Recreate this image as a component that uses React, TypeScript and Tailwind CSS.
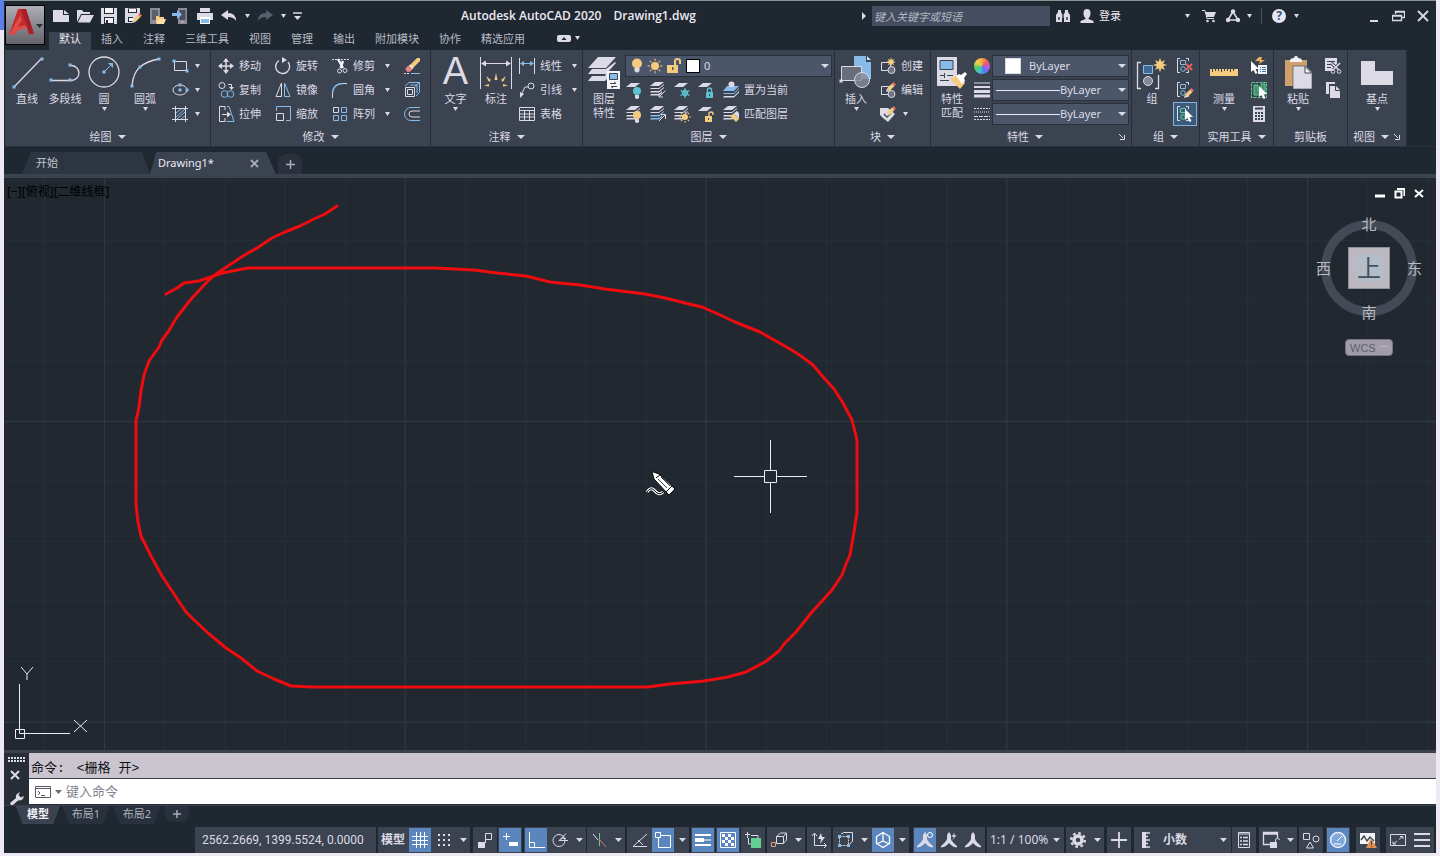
import type { ReactNode } from "react";

const LIGHT = "#dcdae4";
const BLUE = "#86bbea";
const GOLD = "#f6cb80";
const TEAL = "#5fc3cf";

/* ---------- shared pieces ---------- */

function Svg({ w = 18, h = 18, children }: { w?: number; h?: number; children: ReactNode }) {
  return (
    <svg width={w} height={h} viewBox={`0 0 ${w} ${h}`} fill="none" stroke={LIGHT} className="shrink-0" aria-hidden="true">
      {children}
    </svg>
  );
}

function Caret({ size = 5 }: { size?: number }) {
  return (
    <svg width={size} height="4" viewBox="0 0 8 5" preserveAspectRatio="none" className="shrink-0" aria-hidden="true">
      <path d="M0 0h8L4 5z" fill={LIGHT} />
    </svg>
  );
}

function Dot({ x, y, c = BLUE }: { x: number; y: number; c?: string }) {
  return <rect x={x - 1.5} y={y - 1.5} width="3" height="3" fill={c} stroke="none" />;
}

function Sun({ x, y, r = 3, c = GOLD }: { x: number; y: number; r?: number; c?: string }) {
  return (
    <g stroke={c} fill={c} transform={`translate(${x} ${y})`}>
      <circle r={r} stroke="none" />
      {[0, 45, 90, 135, 180, 225, 270, 315].map((a) => (
        <path key={a} d={`M${r + 1} 0h${r * 0.6}`} transform={`rotate(${a})`} />
      ))}
    </g>
  );
}

function Star({ x, y, s = 1 }: { x: number; y: number; s?: number }) {
  return (
    <path
      transform={`translate(${x} ${y}) scale(${s})`}
      d="M0-8 1.5-3.5 5.5-5.5 3.5-1.5 8 0 3.5 1.5 5.5 5.5 1.5 3.5 0 8-1.5 3.5-5.5 5.5-3.5 1.5-8 0-3.5-1.5-5.5-5.5-1.5-3.5z"
      fill={GOLD}
      stroke="none"
    />
  );
}

function Pencil({ x, y }: { x: number; y: number }) {
  return (
    <g transform={`translate(${x} ${y})`} stroke="none">
      <path d="M0 10 1 6.500 3.500 9z" fill={LIGHT} />
      <path d="M1 6.500 6 1.500 8.500 4 3.500 9z" fill={GOLD} />
      <path d="M6 1.500 7.500 0 10 2.500 8.500 4z" fill="#e0716c" />
    </g>
  );
}

function Cursor({ x, y }: { x: number; y: number }) {
  return <path transform={`translate(${x} ${y})`} d="M0 0v11l2.500-2 2 4 2-1-2-4h3.500z" fill="#fff" stroke="none" />;
}

function Layers({ base = LIGHT }: { base?: string }) {
  return (
    <g stroke="none" fill={LIGHT}>
      <path d="M6 1h9l-5 4H1z" />
      <path d="M3 6 1 8h9l5-4v-1l-5 4H2z" />
      <path d="M2 10 1 11.500h9l5-4.500v-1l-5 4z" fill={base} />
      <path d="M2 13 1 14.500h9l3-2.500v-2l-3 3z" fill={base} />
    </g>
  );
}

const Sheet = () => <path d="M6 2h9l-5 4H1z" fill={LIGHT} stroke="none" />;

function Padlock({ x, y, c, open }: { x: number; y: number; c: string; open?: boolean }) {
  return (
    <g transform={`translate(${x} ${y})`}>
      <path d={open ? "M4 4V1.500q0-1.500 2-1.500t2 1.500V3" : "M1.500 4V2q0-2 2-2t2 2v2"} stroke={c} strokeWidth="1.400" />
      <path d="M0 4h7v6H0z" fill={c} stroke="none" />
      <path d="M3 6h1v2H3z" fill="#3b4351" stroke="none" />
    </g>
  );
}

function Bulb({ x, y, c }: { x: number; y: number; c: string }) {
  return (
    <g transform={`translate(${x} ${y})`} stroke="none">
      <circle cx="4" cy="4" r="4" fill={c} />
      <path d="M2 8h4v3q-2 2-4 0z" fill={LIGHT} />
    </g>
  );
}

/* ---------- ribbon controls ---------- */

type BigProps = { icon: ReactNode; label: string; label2?: string; caret?: boolean; className: string };

function BigButton({ icon, label, label2, caret, className }: BigProps) {
  return (
    <button type="button" className={`flex shrink-0 flex-col items-center pt-1.5 ${className}`}>
      <span className="flex h-9 items-start justify-center">{icon}</span>
      <span className="leading-3.5 whitespace-nowrap">{label}</span>
      {label2 && <span className="leading-3.5 whitespace-nowrap">{label2}</span>}
      {caret && <span className="flex h-1.5 items-center"><Caret /></span>}
    </button>
  );
}

type SmallProps = { icon: ReactNode; label?: string; name?: string; caret?: boolean; className?: string };

function SmallButton({ icon, label, name, caret, className = "" }: SmallProps) {
  return (
    <button type="button" aria-label={label ?? name} className={`flex h-6 items-center ${className}`}>
      <span className="flex w-[18px] shrink-0 justify-center">{icon}</span>
      {label && <span className="ml-1 leading-4 whitespace-nowrap">{label}</span>}
      {caret && <span className={label ? "ml-2.5" : "ml-1.5"}><Caret /></span>}
    </button>
  );
}

type PanelProps = { title: string; more?: boolean; launcher?: boolean; className: string; children: ReactNode };

function Panel({ title, more = true, launcher, className, children }: PanelProps) {
  return (
    <section className={`flex shrink-0 flex-col border-r border-[#262d38] bg-[#3b4351] ${className}`}>
      <div className="flex h-[78px]">{children}</div>
      <div className="flex h-[18px] items-center">
        <button type="button" className="flex flex-1 items-center justify-center gap-1.5 leading-4">
          {title}
          {more && <Caret size={8} />}
        </button>
        {launcher && (
          <button type="button" aria-label={`${title}设置`} className="w-3">
            <Svg w={6} h={6}><path d="M0 0l4 4M5.500 1v4.500H1" /></Svg>
          </button>
        )}
      </div>
    </section>
  );
}

function Combo({ name, value, className, children }: { name: string; value: string; className: string; children: ReactNode }) {
  return (
    <div className={`flex h-[22px] items-center border border-[#2a313d] bg-[#4b566a] pr-0.5 ${className}`}>
      {children}
      <select aria-label={name} className="min-w-0 flex-1 appearance-none bg-transparent text-[11px] leading-4 outline-none">
        <option>{value}</option>
      </select>
      <Caret size={8} />
    </div>
  );
}

/* ---------- ribbon ---------- */

function DrawPanel() {
  return (
    <Panel title="绘图" className="w-[206px]">
      <BigButton className="ml-0.5 w-10" label="直线" icon={
        <Svg w={34} h={34}><path d="M4 31 31 3" strokeWidth="1.300" /><Dot x={4} y={31} /><Dot x={32} y={3} /></Svg>
      } />
      <BigButton className="w-9" label="多段线" icon={
        <Svg w={34} h={34}><path d="M3 24.500h20M23 9.500a8 7.500 0 0 1 0 15" strokeWidth="1.300" /><Dot x={3} y={24} /><Dot x={22} y={24} /><Dot x={22} y={9} /></Svg>
      } />
      <BigButton className="w-[42px]" label="圆" caret icon={
        <Svg w={34} h={34}><circle cx="17" cy="16" r="15" strokeWidth="1.300" /><path d="M17 16l6-6" stroke={BLUE} /><path d="M26 7v5l-5-5z" fill={BLUE} stroke="none" /><Dot x={17} y={16} /></Svg>
      } />
      <BigButton className="w-10" label="圆弧" caret icon={
        <Svg w={32} h={34}><path d="M3 30Q4 17 11 11T30 3" strokeWidth="1.300" /><Dot x={3} y={30} /><Dot x={11} y={11} /><Dot x={30} y={3} /></Svg>
      } />
      <div className="ml-1.5 flex flex-col pt-1">
        <SmallButton name="矩形" caret icon={<Svg><path d="M3.500 4.500h12v9h-12z" /><Dot x={3} y={4} /><Dot x={16} y={14} /></Svg>} />
        <SmallButton name="椭圆" caret icon={<Svg><ellipse cx="9" cy="9" rx="7" ry="5" /><Dot x={9} y={9} /><Dot x={16} y={9} /><Dot x={9} y={4} /></Svg>} />
        <SmallButton name="图案填充" caret icon={<Svg><path d="M4.500 1v16M14.500 1v16M1 3.500h16M1 14.500h16" /><path d="M5 8l5-4M5 12l9-8M6 14l8-7M10 14l4-3" stroke={BLUE} /></Svg>} />
      </div>
    </Panel>
  );
}

function ModifyPanel() {
  return (
    <Panel title="修改" className="w-[220px]">
      <div className="ml-1.5 w-[57px] pt-1">
        <SmallButton label="移动" icon={<Svg><path d="M9 2v14M2 9h14" strokeWidth="1.500" /><path d="M9 1l3 4H6zM9 17l3-4H6zM1 9l4-3v6zM17 9l-4-3v6z" fill={LIGHT} stroke="none" /></Svg>} />
        <SmallButton label="复制" icon={<Svg><circle cx="5" cy="4.500" r="3" /><path d="M11 3.500h3.500V6" /><path d="M12 6h5l-2.500 3z" fill={LIGHT} stroke="none" /><g stroke={BLUE}><circle cx="7.500" cy="13" r="3.300" /><circle cx="13.500" cy="13" r="3.300" /></g></Svg>} />
        <SmallButton label="拉伸" icon={<Svg><path d="M8 5V1.500H2.500v15H8V13M5 9.500h6" /><path d="M10 6.500v6l4-3z" fill={LIGHT} stroke="none" /><path d="M10 1.500h2l5 15H9.500" stroke={BLUE} /></Svg>} />
      </div>
      <div className="w-[57px] pt-1">
        <SmallButton label="旋转" icon={<Svg><path d="M5 3.500A7 7 0 1 0 14 5" strokeWidth="1.400" /><path d="M8 0v6l5-3z" fill={LIGHT} stroke="none" /></Svg>} />
        <SmallButton label="镜像" icon={<Svg><path d="M7.500 2v13.500H2z" /><path d="M10.500 2v13.500H16z" stroke={BLUE} /></Svg>} />
        <SmallButton label="缩放" icon={<Svg><path d="M2.500 8.500h7v7h-7z" /><path d="M2.500 6V1.500h14v14H12" stroke={BLUE} /></Svg>} />
      </div>
      <div className="w-[72px] pt-1">
        <SmallButton label="修剪" caret icon={<Svg><path d="M1 2.500h17" strokeDasharray="2 1" /><path d="M7 2l5 9M12 4 9.500 11" stroke="#f2f1f7" strokeWidth="2.400" /><circle cx="8.500" cy="14" r="2" /><circle cx="14" cy="13.500" r="2" /></Svg>} />
        <SmallButton label="圆角" caret icon={<Svg><path d="M1.500 17v-5M12 2.500h4" /><path d="M1.500 12Q2 3 12 2.500" stroke={BLUE} strokeWidth="1.400" /></Svg>} />
        <SmallButton label="阵列" caret icon={<Svg><path d="M2.500 2.500h5v5h-5z" /><path d="M10.500 2.500h5v5h-5zM2.500 10.500h5v5h-5zM10.500 10.500h5v5h-5z" stroke={BLUE} /></Svg>} />
      </div>
      <div className="pt-1">
        <SmallButton name="删除" icon={<Svg><path d="M1 16.500h5" strokeDasharray="2 1" /><path d="M8 16.500h9" stroke={BLUE} /><g stroke="none"><path d="M5 10 14 1h3v3l-9 9z" fill={GOLD} /><path d="M7 7.500 10.500 11l-1 1L6 8.500z" fill="#f5f5fa" /><path d="M6 8.500 9.500 12l-2 2.500-3 .5-2-2.500.5-2z" fill="#e88481" /></g></Svg>} />
        <SmallButton name="分解" icon={<Svg><path d="M2.500 6.500h9v9h-9zM4.500 8.500h5v5h-5z" /><path d="M2 5l4-3.500h10.500v10L13 15M11.500 6l5-4.500M7 4h7v8" stroke={BLUE} /></Svg>} />
        <SmallButton name="偏移" icon={<Svg><path d="M17 2.500H8a6.500 6.500 0 0 0 0 13h9" stroke={BLUE} /><path d="M17 6H9a3 3 0 0 0 0 6h8" /></Svg>} />
      </div>
    </Panel>
  );
}

function AnnotatePanel() {
  return (
    <Panel title="注释" className="w-[152px]">
      <BigButton className="ml-1 w-[41px]" label="文字" caret icon={
        <span className="font-[Liberation_Sans,sans-serif] text-[38px] leading-[30px] text-[#dcdae4]">A</span>
      } />
      <BigButton className="w-10" label="标注" icon={
        <Svg w={34} h={34}>
          <path d="M1.500 1v32M32.500 1v32M3 7.500h28" />
          <path d="M2 7.500l5-3v6zM32 7.500l-5-3v6z" fill={LIGHT} stroke="none" />
          <g fill={GOLD} stroke="none"><path d="M15.500 24l1.500-7 1.500 7zM12 24l-5-4 3 6zM22 24l5-4-3 6zM10 28l-5 1.500 5 1zM24 28l5 1.500-5 1z" /></g>
        </Svg>
      } />
      <div className="ml-0.5 pt-1">
        <SmallButton label="线性" caret icon={<Svg><path d="M1.500 1v16M16.500 1v16" /><path d="M3 6.500h12" stroke={BLUE} /><path d="M2 6.500l4-2.500v5zM16 6.500l-4-2.500v5z" fill={BLUE} stroke="none" /></Svg>} />
        <SmallButton label="引线" caret icon={<Svg><circle cx="13" cy="5" r="3" /><path d="M10 6H7L3 14" /><path d="M2 11v6l4-4z" fill={LIGHT} stroke="none" /></Svg>} />
        <SmallButton label="表格" icon={<Svg><path d="M1.500 2.500h15v13h-15zM1.500 5.500h15M1.500 9h15M1.500 12h15M6.500 5v10M11.500 5v10" /></Svg>} />
      </div>
    </Panel>
  );
}

function LayerPanel() {
  return (
    <Panel title="图层" className="w-[252px]">
      <BigButton className="ml-1 w-[34px]" label="图层" label2="特性" icon={
        <Svg w={34} h={34}>
          <g fill={LIGHT} stroke="none"><path d="M11 1h18L19 12H1z" /><path d="M5 13 1 18h18L29 7l-1-1-9 7z" /><path d="M5 20 1 25h17l2-2v-8l-2 5z" /></g>
          <path d="M20 15h13v18H20z" fill="#f5f5fa" stroke="none" />
          <path d="M22.500 17.500h8v6h-8z" fill={BLUE} stroke="#3b4351" />
          <path d="M23 27.500h6l-2-1.500M30 30.500h-6l2 1.500" stroke="#3b4351" />
        </Svg>
      } />
      <div className="ml-1 flex flex-col pt-[5px]">
        <Combo name="图层" value="0" className="mb-px w-[207px] gap-1 pl-0.5">
          <div className="flex items-center">
            <Svg w={18} h={18}><circle cx="9" cy="6.500" r="5" fill={GOLD} stroke="none" /><path d="M6.500 11h5v3q-2.500 3-5 0z" fill={LIGHT} stroke="none" /></Svg>
            <Svg w={18} h={18}><Sun x={9} y={9} r={4} /></Svg>
            <Svg w={20} h={18}><path d="M3 8h11v8H3z" fill={GOLD} stroke="none" /><path d="M11 8V4q0-2 2.500-2T16 4v3" stroke={GOLD} strokeWidth="2" /><path d="M8 10h1.500v3H8z" fill="#4b566a" stroke="none" /></Svg>
            <span className="ml-0.5 size-3.5 border border-black bg-white" />
          </div>
        </Combo>
        <div className="flex h-6">
          <SmallButton name="关" className="w-6" icon={<Svg><Sheet /><Bulb x={8} y={6} c={TEAL} /></Svg>} />
          <SmallButton name="隔离" className="w-6" icon={<Svg><Layers /><path d="M16.500 9.500l-6 6M10 12v4h4" /></Svg>} />
          <SmallButton name="冻结" className="w-6" icon={<Svg><Sheet /><g stroke={TEAL} strokeWidth="1.300"><path d="M12 7v10M7.500 9.500l9 5M16.500 9.500l-9 5" /><circle cx="12" cy="12" r="2.500" /></g></Svg>} />
          <SmallButton name="锁定" className="w-6" icon={<Svg><Sheet /><Padlock x={9} y={7} c={TEAL} /></Svg>} />
          <SmallButton label="置为当前" className="ml-px" icon={<Svg><path d="M5 5h12l-5 5H1zM2 12l-1 1h11l5-5V7l-5 5z" fill={BLUE} stroke="none" /><circle cx="9.500" cy="3.500" r="3" fill={LIGHT} stroke="none" /><path d="M2 15l-1 1.500h11l5-5V10l-5 5z" fill={LIGHT} stroke="none" /></Svg>} />
        </div>
        <div className="flex h-6">
          <SmallButton name="打开所有图层" className="w-6" icon={<Svg><Layers /><Bulb x={8} y={6} c={GOLD} /></Svg>} />
          <SmallButton name="取消隔离" className="w-6" icon={<Svg><Layers base={BLUE} /><path d="M10 16l6-6M12 9.500h4.500V14" /></Svg>} />
          <SmallButton name="解冻所有图层" className="w-6" icon={<Svg><Layers /><Sun x={12} y={12} r={3} /></Svg>} />
          <SmallButton name="解锁" className="w-6" icon={<Svg><Sheet /><Padlock x={8} y={7} c={GOLD} open /></Svg>} />
          <SmallButton label="匹配图层" className="ml-px" icon={<Svg><Layers /><path d="M8 11l4-2 5 5-3 3z" fill={GOLD} stroke="none" /><path d="M12 9l3-3 2 2v6z" fill={LIGHT} stroke="none" /></Svg>} />
        </div>
      </div>
    </Panel>
  );
}

const BlockShape = () => (
  <g><path d="M2.500 13.500v-8h9v5M2 13.500h8" /><circle cx="12.500" cy="13" r="3.500" fill="#6f7482" /></g>
);

function BlockPanel() {
  return (
    <Panel title="块" className="w-24">
      <BigButton className="ml-0.5 w-[38px]" label="插入" caret icon={
        <Svg w={34} h={34}>
          <path d="M15 0h12v6h5v17H15z" fill={BLUE} stroke="none" /><path d="M28 0l4 4h-4z" fill="#c4e0f8" stroke="none" />
          <path d="M2.500 10.500h20v14h-20z" fill="#686e7b" /><circle cx="23" cy="24" r="7.500" fill="#878c98" fillOpacity=".8" /><Dot x={2} y={25} c={LIGHT} />
        </Svg>
      } />
      <div className="ml-1 pt-1">
        <SmallButton label="创建" icon={<Svg><BlockShape /><Star x={12} y={5} s={0.6} /></Svg>} />
        <SmallButton label="编辑" icon={<Svg><BlockShape /><Pencil x={7} y={1} /></Svg>} />
        <SmallButton name="编辑属性" caret icon={<Svg><path d="M1 3h8l7 6-7 8-5-4-3-3z" fill={LIGHT} stroke="none" /><path d="M5 9l3 3 4-4" stroke="#3b4351" strokeWidth="1.500" /><Pencil x={7} y={1} /></Svg>} />
      </div>
    </Panel>
  );
}

function PropertiesPanel() {
  return (
    <Panel title="特性" launcher className="w-[201px]">
      <BigButton className="ml-px w-10" label="特性" label2="匹配" icon={
        <Svg w={32} h={34}>
          <path d="M1 1h20v29H1z" fill={LIGHT} stroke="none" /><path d="M4 4.500h13v9H4z" fill={BLUE} stroke="#3b4351" />
          <path d="M4 19.500h5m2 0h6M8.500 17v5M4 24.500h9" stroke="#3b4351" />
          <path d="M14 23l7-4 8 8-5 6z" fill={GOLD} stroke="none" /><path d="M20 20l3-2 2 1 4-3 2 2-3 4 1 3-3 3z" fill="#fff" stroke="none" />
        </Svg>
      } />
      <div className="flex w-5 flex-col items-center pt-1">
        <span className="flex h-6 items-center">
          <span className="size-4 rounded-full bg-[conic-gradient(#f5a742,#ea5b5b,#b45bea,#4d7df0,#45c4c9,#5fc75f,#f0d34d,#f5a742)]" />
        </span>
        <span className="flex h-6 items-center"><Svg w={16} h={16}><path d="M0 1h16" strokeWidth="1" /><path d="M0 5h16" strokeWidth="2" /><path d="M0 9.500h16" strokeWidth="3" /><path d="M0 14h16" strokeWidth="3" /></Svg></span>
        <span className="flex h-6 items-center"><Svg w={16} h={16}><path d="M0 2.500h16" strokeDasharray="2 1" /><path d="M0 6h16" strokeDasharray="1 1" /><path d="M0 10.500h16" strokeDasharray="4 1" /><path d="M0 13.500h16" strokeDasharray="2 1" /></Svg></span>
      </div>
      <div className="flex flex-col gap-0.5 pt-[5px]">
        <Combo name="对象颜色" value="ByLayer" className="w-[137px] gap-2 pl-3">
          <span className="size-4 border border-[#d9d9d9] bg-white" />
        </Combo>
        <Combo name="线宽" value="ByLayer" className="w-[137px] pl-[3px]">
          <span className="h-px w-16 bg-[#eceaf2]" />
        </Combo>
        <Combo name="线型" value="ByLayer" className="w-[137px] pl-[3px]">
          <span className="h-px w-16 bg-[#eceaf2]" />
        </Combo>
      </div>
    </Panel>
  );
}

const Brackets = ({ c = BLUE, fill = "none" }: { c?: string; fill?: string }) => (
  <g><path d="M4 1.500H1.500v14H4M10 1.500h2.500V4M10 15.500h2.500V13" /><path d="M4.500 3.500h5v4h-5z" stroke={c} fill={fill} /><circle cx="7" cy="12" r="2.300" stroke={c} fill={fill} /></g>
);

function GroupPanel() {
  return (
    <Panel title="组" className="w-[68px]">
      <BigButton className="ml-0.5 w-9" label="组" icon={
        <Svg w={32} h={34}>
          <path d="M5 6.500H1.500v26H5M19 32.500h3.500V19" strokeWidth="1.300" />
          <path d="M7.500 9.500h9v8h-9z" fill="#3f6a94" stroke={BLUE} /><circle cx="12" cy="25" r="4.500" fill="#858995" /><Star x={24} y={9} s={0.9} />
        </Svg>
      } />
      <div className="ml-[3px] flex flex-col items-center pt-1">
        <SmallButton name="解除编组" className="w-6 justify-center" icon={<Svg><Brackets /><path d="M10 7l6 6m0-6l-6 6" stroke="#e0605f" strokeWidth="2" /></Svg>} />
        <SmallButton name="组编辑" className="w-6 justify-center" icon={<Svg><Brackets /><Pencil x={8} y={7} /></Svg>} />
        <SmallButton name="启用组选择" className="w-6 justify-center border border-[#7fb2e0] bg-[#3d5a78]" icon={<Svg><Brackets c="#62cf93" /><Cursor x={9} y={4} /></Svg>} />
      </div>
    </Panel>
  );
}

function UtilityPanel() {
  return (
    <Panel title="实用工具" className="w-[74px]">
      <BigButton className="ml-1.5 w-9" label="测量" caret icon={
        <Svg w={30} h={34}><path d="M1 13h28v7H1z" fill={GOLD} stroke="none" /><path d="M3.500 13v3m3-3v2m3-2v2m3-2v3m3-3v2m3-2v2m3-2v3m3-3v2" stroke="#3b4351" /></Svg>
      } />
      <div className="ml-2 pt-1">
        <SmallButton name="快速选择" icon={<Svg><path d="M9 0h3l-1 3h4l-6 4 1-3H5z" fill="#f3b05a" stroke="none" /><path d="M8 8h9v9H8z" fill="#f1f1f6" stroke="none" /><path d="M10 10.500h1m1 0h4m-6 2h1m1 0h4m-6 2h1m1 0h4" stroke="#3f78ad" /><Cursor x={1} y={4} /></Svg>} />
        <SmallButton name="全部选择" icon={<Svg><path d="M1.500 1.500h15v15h-15z" stroke="#62cf93" strokeDasharray="3 1" /><path d="M4 4h4v6h3V3h4v11H4z" fill="#3c9468" stroke="#62cf93" /><Cursor x={9} y={5} /></Svg>} />
        <SmallButton name="计算器" icon={<Svg><path d="M3 1h12v16H3z" fill={LIGHT} stroke="none" /><path d="M5 3.500h8" stroke="#3b4351" strokeWidth="2" /><path d="M5 8h8M5 11h8M5 14h8" stroke="#3b4351" strokeWidth="2" strokeDasharray="2 1" /></Svg>} />
      </div>
    </Panel>
  );
}

function ClipboardPanel() {
  return (
    <Panel title="剪贴板" more={false} className="w-[74px]">
      <BigButton className="ml-1.5 w-9" label="粘贴" caret icon={
        <Svg w={30} h={34}>
          <path d="M2 4h22v26H2z" fill="#cf9f6c" stroke="none" /><path d="M7 4q1-2 4-2 0-2 2-2t2 2q3 0 4 2v2H7z" fill="#f5f5fa" stroke="none" />
          <path d="M10 10h13l6 6v17H10z" fill={LIGHT} stroke="#3b4351" strokeWidth=".6" /><path d="M22 10.500v6.500h6.500z" fill="#fff" stroke="#3b4351" />
        </Svg>
      } />
      <div className="ml-2 pt-1">
        <SmallButton name="剪切" icon={<Svg><path d="M1 1h12v7l-4 6H1z" fill={LIGHT} stroke="none" /><path d="M3 4.500h8M3 7.500h4M3 10.500h4" stroke="#3b4351" /><path d="M7 6l8 7M16 6l-7 7" stroke="#3b4351" strokeWidth="3" /><path d="M7 6l8 7M16 6l-7 7" strokeWidth="1.500" /><circle cx="9" cy="14.500" r="1.800" /><circle cx="15" cy="14.500" r="1.800" /></Svg>} />
        <SmallButton name="复制剪裁" icon={<Svg><path d="M2 1h9v2H5v10H2z" fill={LIGHT} stroke="none" /><path d="M6 5h6l4 4v8H6z" fill={LIGHT} stroke="none" /><path d="M11.500 5v4.500H16" stroke="#3b4351" /></Svg>} />
      </div>
    </Panel>
  );
}

function Ribbon() {
  return (
    <div className="ml-px flex h-[97px] overflow-hidden border-b border-[#2a313c] text-[11px] text-[#dcdae4]">
      <DrawPanel />
      <ModifyPanel />
      <AnnotatePanel />
      <LayerPanel />
      <BlockPanel />
      <PropertiesPanel />
      <GroupPanel />
      <UtilityPanel />
      <ClipboardPanel />
      <Panel title="视图" launcher className="w-[59px]">
        <BigButton className="ml-[9px] w-10" label="基点" caret icon={
          <Svg w={34} h={34}><path d="M1 5h14v10h18v14H1z" fill={LIGHT} stroke="none" /></Svg>
        } />
      </Panel>
    </div>
  );
}

/* ---------- title bar ---------- */

function IconButton({ name, className = "w-6", children }: { name: string; className?: string; children: ReactNode }) {
  return (
    <button type="button" aria-label={name} className={`flex h-6 shrink-0 items-center justify-center ${className}`}>
      {children}
    </button>
  );
}

function QuickAccess() {
  return (
    <div className="flex items-center">
      <IconButton name="新建"><Svg><path d="M1 3h10v5h6v7H1z" fill={LIGHT} stroke="none" /><path d="M12 3l5 4h-5z" fill={LIGHT} stroke="none" /></Svg></IconButton>
      <IconButton name="打开"><Svg><path d="M1 15V3h5l1.500 2H14v2H5z" fill={LIGHT} stroke="none" /><path d="M5.500 8H18l-4 7.500H2z" fill={LIGHT} stroke="none" /></Svg></IconButton>
      <IconButton name="保存"><Svg><path d="M1 1h16v16H1z" fill={LIGHT} stroke="none" /><path d="M4 1h10v6H4zM4 10h10v7H4z" fill="#1f2730" stroke="none" /><path d="M5 1h8v5H5zM5 11h8v5H5z" fill="#f4f4f9" stroke="none" /><path d="M6 13h2v3H6z" fill="#1f2730" stroke="none" /></Svg></IconButton>
      <IconButton name="另存为"><Svg><path d="M1 1h15v6l-8 9H1z" fill={LIGHT} stroke="none" /><path d="M4 1.500h9V6H4zM4 10h5v5H4z" fill="#1f2730" stroke="none" /><path d="M5 2h7v3H5zM5 11h4v3H5z" fill="#f4f4f9" stroke="none" /><Pencil x={8} y={6} /></Svg></IconButton>
      <IconButton name="从移动设备打开"><Svg><path d="M2 1h10v8H8v8H2z" fill="#8a8d97" stroke="none" /><path d="M4 3h6v10H4z" fill="#5a5f6c" stroke="none" /><path d="M8 9h3l1 1h4v6H8z" fill={GOLD} stroke="none" /><path d="M10.500 12H18l-2 5H8z" fill="#fbe0aa" stroke="none" /></Svg></IconButton>
      <IconButton name="保存到移动设备"><Svg><path d="M6 1h9v16H6z" fill="#8a8d97" stroke="none" /><path d="M7.500 3h6v10h-6z" fill="#4a4f5c" stroke="none" /><path d="M9.500 15h2" /><path d="M0 6h5V3l5 4.500L5 12V9H0z" fill={BLUE} stroke="none" /></Svg></IconButton>
      <IconButton name="打印"><Svg><path d="M4 1h10v4H4zM1 6h16v7H1z" fill={LIGHT} stroke="none" /><path d="M4 10h10v7H4z" fill="#fff" stroke="none" /><path d="M5 12h8v4H5z" fill={BLUE} stroke="none" /></Svg></IconButton>
      <IconButton name="放弃"><Svg><path d="M1 8l7-5v3q8 0 8 8-2-4-8-4v3z" fill={LIGHT} stroke="none" /></Svg></IconButton>
      <IconButton name="放弃列表" className="w-3"><Caret /></IconButton>
      <IconButton name="重做"><Svg><path d="M17 8l-7-5v3q-8 0-8 8 2-4 8-4v3z" fill="#58606e" stroke="none" /></Svg></IconButton>
      <IconButton name="重做列表" className="w-3"><Caret /></IconButton>
      <IconButton name="自定义快速访问工具栏" className="w-4"><Svg w={9} h={8}><path d="M0 1h9" strokeWidth="1.500" /><path d="M1 4h7L4.500 8z" fill={LIGHT} stroke="none" /></Svg></IconButton>
    </div>
  );
}

function TitleBar() {
  return (
    <div className="flex h-[30px] items-center pr-px text-[11px] text-[#eceaf2]">
      <QuickAccess />
      <h1 className="flex flex-1 justify-center gap-3 pr-1 font-['Open_Sans',sans-serif] text-xs font-semibold whitespace-nowrap">
        <span>Autodesk AutoCAD 2020</span>
        <span>Drawing1.dwg</span>
      </h1>
      <IconButton name="收起搜索" className="w-4"><Svg w={4} h={8}><path d="M0 0l4 4-4 4z" fill={LIGHT} stroke="none" /></Svg></IconButton>
      <input
        aria-label="搜索"
        placeholder="键入关键字或短语"
        className="h-5 w-[178px] bg-[#454e60] px-0.5 text-[11px] italic outline-none placeholder:text-[#b4b6c2]"
      />
      <IconButton name="搜索" className="ml-px w-6"><Svg w={14} h={14}><path d="M2 1h3v2l1 2v8H0V6l2-3zM9 1h3v2l2 3v7H8V5l1-2z" fill={LIGHT} stroke="none" /><path d="M6 5h2v4H6zM2 8h2v3H2zM10 8h2v3h-2z" fill="#5b6270" stroke="none" /></Svg></IconButton>
      <button type="button" className="flex items-center">
        <span className="flex w-6 justify-center"><Svg w={14} h={14}><path d="M7 0q3.500 0 3.500 4T8.500 9v1l5 2v2H.500v-2l5-2V9Q3.500 8 3.500 4T7 0z" fill={LIGHT} stroke="none" /></Svg></span>
        登录
      </button>
      <IconButton name="登录选项" className="ml-[59px] w-3.5"><Caret /></IconButton>
      <IconButton name="应用商店" className="ml-[3px] w-6"><Svg w={16} h={14}><path d="M1 1.500h3l2 8h7" /><path d="M4 3h11l-2 5H6z" fill={LIGHT} stroke="none" /><circle cx="6.500" cy="12" r="1.300" fill={LIGHT} stroke="none" /><circle cx="12.500" cy="12" r="1.300" fill={LIGHT} stroke="none" /></Svg></IconButton>
      <IconButton name="保持连接"><Svg w={16} h={14}><path d="M8 2.500 3 11h10z" strokeWidth="1.600" /><g fill={LIGHT} stroke="none"><circle cx="8" cy="2.500" r="2.200" /><circle cx="3" cy="11" r="2.200" /><circle cx="13" cy="11" r="2.200" /></g></Svg></IconButton>
      <IconButton name="连接选项" className="w-2"><Caret /></IconButton>
      <span className="mx-2 h-4 w-px bg-[#4b5260]" />
      <IconButton name="帮助" className="w-[18px]">
        <span className="flex size-3.5 items-center justify-center rounded-full bg-[#e6e5f0] text-xs font-bold text-[#2f5586]">?</span>
      </IconButton>
      <IconButton name="帮助选项" className="w-4"><Caret /></IconButton>
      <IconButton name="最小化" className="ml-[58px] w-6"><Svg w={12} h={14}><path d="M2 12h8" strokeWidth="2" /></Svg></IconButton>
      <IconButton name="还原"><Svg w={13} h={12}><path d="M3.500 4V1.500h9v6H10M3 2h9M.500 5.500h9v5h-9zM0 6h9" strokeWidth="1.300" /></Svg></IconButton>
      <IconButton name="关闭" className="ml-px w-6"><Svg w={12} h={12}><path d="M1 1l10 10M11 1 1 11" strokeWidth="1.800" /></Svg></IconButton>
    </div>
  );
}

const MENU = ["默认", "插入", "注释", "三维工具", "视图", "管理", "输出", "附加模块", "协作", "精选应用"];

function Header() {
  return (
    <header className="flex border-t border-[#8b9097]">
      <button type="button" aria-label="应用程序菜单" className="mt-1 mr-1 ml-px flex size-10 shrink-0 items-center border border-black bg-linear-to-b from-[#b0aeb6] to-[#65646d]">
        <Svg w={38} h={38}>
          <g stroke="none">
            <path d="M12 3h8l8 25h-5.500l-2-7-9 3L8 29H3z" fill="#c42b2f" />
            <path d="M3 29 14 9l2 5-4 7 7-2 1 3-9 3-3 4z" fill="#e04a48" />
            <path d="M15 3h5l8 25h-4z" fill="#a41f27" />
            <path d="M30 18h7l-3.500 4z" fill="#2a2d35" />
          </g>
        </Svg>
      </button>
      <div className="min-w-0 flex-1">
        <TitleBar />
        <nav className="flex h-[19px] items-end text-[11px] leading-4 text-[#b9bbc6]">
          {MENU.map((item, i) => (
            <button
              key={item}
              type="button"
              className={i === 0 ? "h-[18px] bg-[#3b4351] px-2.5 pb-1 leading-3.5 text-[#eceaf2]" : "h-[18px] px-2.5 pb-1 leading-3.5 whitespace-nowrap"}
            >
              {item}
            </button>
          ))}
          <IconButton name="最小化功能区" className="ml-[22px] w-3.5"><Svg w={14} h={7}><rect width="14" height="7" rx="2" fill={LIGHT} stroke="none" /><path d="M7 2l2.500 3h-5z" fill="#1f2730" stroke="none" /></Svg></IconButton>
          <IconButton name="功能区选项" className="w-3"><Caret /></IconButton>
        </nav>
      </div>
    </header>
  );
}

/* ---------- drawing area ---------- */

function FileTabs() {
  return (
    <div className="flex h-[31px] items-end border-b-4 border-[#3b4351] pl-[18px] text-[11px] text-[#c3c4ce]">
      <button type="button" className="h-[22px] w-32 bg-[#2d3542] pl-3.5 text-left [clip-path:polygon(7%_0,94%_0,100%_100%,0_100%)]">开始</button>
      <div className="flex h-[22px] w-[126px] items-center justify-between bg-[#3b4351] pr-[17px] pl-2 text-[#eceaf2] [clip-path:polygon(5%_0,92%_0,100%_100%,0_100%)]">
        <button type="button">Drawing1*</button>
        <button type="button" aria-label="关闭 Drawing1"><Svg w={9} h={9}><path d="M1 1l7 7M8 1 1 8" strokeWidth="1.800" stroke="#a9abb6" /></Svg></button>
      </div>
      <button type="button" aria-label="新图形" className="ml-0.5 flex h-5 w-6 items-center justify-center rounded-t-lg bg-[#2a313d]">
        <Svg w={9} h={9}><path d="M4.500 0v9M0 4.500h9" strokeWidth="1.500" stroke="#a9abb6" /></Svg>
      </button>
    </div>
  );
}

const STROKE =
  "337,206 325,214 314,219 300,226 285,232 272,238 257,248 243,256 225,268 216,274 207,282 192,298 177,317 168,332 162,340 159,347 149,361 144,375 141,391 139,407 136,421 136,505 138,522 141,536 151,556 162,576 174,594 186,612 192,618 208,633 226,648 241,658 257,671 274,679 291,686 312,687 648,687 670,684 704,681 728,677 746,672 765,662 779,651 784,644 796,632 812,612 832,590 842,575 846,564 850,555 854,532 857,512 857,440 852,420 843,403 834,389 824,378 813,365 801,356 790,349 774,340 760,332 735,322 718,314 702,307 685,303 665,298 645,294 605,289 580,285 550,282 526,276 497,273 474,270 435,268 248,268 222,273 199,281 184,283 177,288 166,294";

function Canvas() {
  return (
    <main className="relative min-h-[572px] flex-1 overflow-hidden bg-[#212830] text-[#eceaf2]">
      <svg className="absolute inset-0 size-full" fill="none" aria-hidden="true">
        <defs>
          <pattern id="minor" width="60.15" height="60.15" x="40" y="2" patternUnits="userSpaceOnUse">
            <path d="M0 .5h60.200M.5 0v60.200" stroke="#262e38" />
          </pattern>
          <pattern id="major" width="300.75" height="300.75" x="100" y="243" patternUnits="userSpaceOnUse">
            <path d="M0 .5h301M.5 0v301" stroke="#303843" />
          </pattern>
        </defs>
        <rect width="100%" height="100%" fill="url(#minor)" />
        <rect width="100%" height="100%" fill="url(#major)" />
        <g transform="translate(-4 -178)">
          <polyline points={STROKE} stroke="#ee0c10" strokeWidth="3" strokeLinecap="round" strokeLinejoin="round" />
          {/* crosshair */}
          <path d="M734 476.500h30M777 476.500h30M770.500 440v30M770.500 483v30M764.500 470.500h12v12h-12z" stroke="#eceaf2" />
          {/* pencil pointer */}
          <path d="M652 471.500l7 2.500 16 15-6 6-15-16z" fill="#fff" stroke="#0b0e12" />
          <path d="M656 478l5-4M666 492l6-6" stroke="#0b0e12" />
          <path d="M658 479l9 9M661 477l9 9" stroke="#0b0e12" strokeWidth=".8" />
          <path d="M647 492q4-6 8-1t8 1" stroke="#fff" strokeWidth="3" />
          <path d="M647 492q4-6 8-1t8 1" stroke="#0b0e12" />
        </g>
      </svg>

      <p className="absolute top-1.5 left-[3px] text-xs leading-4 text-black">[−][俯视][二维线框]</p>

      <div className="absolute top-2 right-[9px] flex gap-1">
        <button type="button" aria-label="最小化视口" className="flex w-4 justify-center"><Svg w={11} h={14}><path d="M1 10h10" strokeWidth="3" stroke="#fff" /></Svg></button>
        <button type="button" aria-label="还原视口" className="flex w-4 justify-center"><Svg w={11} h={14}><path d="M3 3h7.500v7M1.500 5.500h6v6h-6z" stroke="#fff" strokeWidth="2" /></Svg></button>
        <button type="button" aria-label="关闭视口" className="flex w-4 justify-center"><Svg w={10} h={14}><path d="M1 4l8 7M9 4l-8 7" stroke="#fff" strokeWidth="2" /></Svg></button>
      </div>

      <div className="absolute top-9 right-[13px] flex w-[108px] flex-col items-center">
        <div className="relative flex size-[108px] items-center justify-center text-[15px] leading-5 text-[#b9bbc2]">
          <span className="absolute size-24 rounded-full border-[9px] border-[#434a55]" />
          <button type="button" className="absolute top-0">北</button>
          <button type="button" className="absolute left-px">西</button>
          <button type="button" className="absolute right-px">东</button>
          <button type="button" className="absolute bottom-0">南</button>
          <button type="button" className="relative flex size-[42px] items-center justify-center border border-[#8f9098] bg-[#bcb8bf]">
            <span className="flex size-7 items-center justify-center bg-[#b4bcc8] text-2xl leading-7 text-[#3f5160]">上</span>
          </button>
        </div>
        <button type="button" className="mt-[17px] flex h-[17px] w-12 items-center gap-1 rounded-sm border border-[#78747f] bg-[#a09da9] pl-1 font-[Liberation_Sans,sans-serif] text-[11px] leading-4 text-[#5f5d69]">
          WCS
          <span className="h-1 w-2 border-t border-[#b8b5c0]" />
        </button>
      </div>

      {/* UCS icon */}
      <svg width="90" height="80" viewBox="0 0 90 80" fill="none" stroke="#eceaf2" className="absolute bottom-[7px] left-2.5" aria-hidden="true">
        <path d="M5.500 21v45M11 70.500h45M1.500 66.500h9v9h-9zM5.500 66v4.500H11" />
        <path d="M7 4l6 7 6-7M13 11v6M60 57l13 12M73 57 60 69" />
      </svg>
    </main>
  );
}

/* ---------- command line and layout tabs ---------- */

function CommandLine() {
  return (
    <section className="flex border-t-[3px] border-[#3a414c] bg-[#262d37]">
      <div className="flex w-[25px] flex-col items-center gap-2 pt-1">
        <Svg w={17} h={5}><path d="M0 1h17M0 4h17" strokeWidth="2" strokeDasharray="2 1" /></Svg>
        <button type="button" aria-label="关闭命令行" className="pr-1"><Svg w={10} h={10}><path d="M1 1l8 8M9 1 1 9" strokeWidth="2" /></Svg></button>
        <button type="button" aria-label="自定义" className="pt-1"><Svg w={14} h={13}><path d="M1 13 0 11l6-5q-1-4 4-6L8.500 3l2.500 2.500L14 4q-1 5-6 4.500L3 13z" fill={LIGHT} stroke="none" /></Svg></button>
      </div>
      <div className="flex-1">
        <p className="flex h-[26px] items-center gap-3 border-b border-[#3a3d45] bg-[#cac4cf] pt-1.5 pl-0.5 font-['Liberation_Mono','Noto_Sans_CJK_SC',monospace] text-[13px] text-[#101216]">
          <span>命令:</span>
          <span>&lt;栅格 开&gt;</span>
        </p>
        <div className="flex h-[25px] items-center bg-white pl-1.5">
          <button type="button" aria-label="最近使用的命令" className="flex items-center gap-1">
            <Svg w={16} h={12}><path d="M.5.500h15v11H.500zM1 2.500h14M3 5l2 2-2 2M6 9.500h4" stroke="#5b5a63" /></Svg>
            <svg width="7" height="4" viewBox="0 0 7 4" aria-hidden="true"><path d="M0 0h7L3.500 4z" fill="#6b6a72" /></svg>
          </button>
          <input aria-label="命令" placeholder="键入命令" className="ml-1 flex-1 bg-transparent text-[13px] text-black outline-none placeholder:text-[#85838c]" />
        </div>
      </div>
    </section>
  );
}

function LayoutTabs() {
  return (
    <nav className="flex h-[22px] items-start border-t border-[#3a414c] pl-3 text-[11px] leading-4 text-[#aeb0bb]">
      <button type="button" className="h-[18px] w-11 bg-[#3b4351] pb-0.5 font-bold text-[#f1f0f6] [clip-path:polygon(0_0,100%_0,85%_100%,15%_100%)]">模型</button>
      <button type="button" className="ml-0.5 h-[18px] w-12 bg-[#29313c] pb-0.5 [clip-path:polygon(0_0,100%_0,85%_100%,15%_100%)]">布局1</button>
      <button type="button" className="ml-[3px] h-[18px] w-12 bg-[#29313c] pb-0.5 [clip-path:polygon(0_0,100%_0,85%_100%,15%_100%)]">布局2</button>
      <button type="button" aria-label="新建布局" className="ml-1 flex h-4 w-6 items-center justify-center rounded-b-lg bg-[#29313c]">
        <Svg w={8} h={8}><path d="M4 0v8M0 4h8" strokeWidth="1.500" stroke="#a9abb6" /></Svg>
      </button>
    </nav>
  );
}

/* ---------- status bar ---------- */

function Toggle({ name, on, className = "", children }: { name: string; on?: boolean; className?: string; children: ReactNode }) {
  return (
    <button type="button" aria-label={name} aria-pressed={!!on} className={`flex w-6 shrink-0 items-center justify-center bg-[#3b4351] ${className}`}>
      <span className={`flex h-6 w-[22px] items-center justify-center ${on ? "bg-[#5a85bd]" : ""}`}>
        <Svg>{children}</Svg>
      </span>
    </button>
  );
}

function Drop({ name }: { name: string }) {
  return (
    <button type="button" aria-label={`${name}选项`} className="flex w-3.5 shrink-0 items-center justify-center bg-[#3b4351]">
      <Caret size={7} />
    </button>
  );
}

const Person = () => <path d="M9 1q2 2 2 4v3q1 3 6 7v1.500q-4-.500-6-2.500L9 12l-2 2q-2 2-6 2.500V15q5-4 6-7V5q0-2 2-4z" fill={LIGHT} stroke="none" />;

function StatusBar() {
  return (
    <footer className="flex h-[26px] justify-end pr-0.5 text-xs text-[#dcdae4]">
      <div className="flex w-[181px] shrink-0 items-center bg-[#3b4351] pl-[7px] font-[Roboto,sans-serif] whitespace-nowrap">2562.2669, 1399.5524, 0.0000</div>
      <button type="button" className="ml-0.5 w-[30px] shrink-0 bg-[#3b4351] font-bold">模型</button>
      <Toggle name="栅格" on><path d="M5.500 1v16M9.500 1v16M13.500 1v16M1 5.500h16M1 9.500h16M1 13.500h16" stroke="#fff" /></Toggle>
      <Toggle name="捕捉"><path d="M3 4h14M3 9h14M3 14h14" strokeWidth="2" strokeDasharray="2 3" /></Toggle>
      <Drop name="捕捉" />
      <Toggle name="推断约束" className="ml-[3px]"><path d="M9.500 12V2.500h6v6H10" /><path d="M2 11h7v6H2z" fill={LIGHT} stroke="none" /></Toggle>
      <Toggle name="动态输入" on className="ml-px"><path d="M5.500 2v7M2 5.500h7" stroke="#fff" /><path d="M8 11h9v4H8z" fill="#fff" stroke="none" /></Toggle>
      <Toggle name="正交" on className="ml-0.5"><path d="M2.500 1v15.500H18M2.500 11.500h5v5" stroke="#fff" /></Toggle>
      <Toggle name="极轴追踪"><circle cx="8" cy="9.500" r="6" /><path d="M8 9.500h9M8 9.500l7-7" /><path d="M11 7l4 .500M9 9.500l4-4" /></Toggle>
      <Drop name="极轴追踪" />
      <Toggle name="等轴测草图" className="ml-px"><path d="M9.500 2v6M9.500 9v6" stroke="#62cf93" /><path d="M3 3l5 6" /><path d="M9 8l7 8" stroke="#e0716c" /></Toggle>
      <Drop name="等轴测草图" />
      <Toggle name="对象捕捉追踪" className="ml-0.5"><path d="M17 3 3 15.500h14" /><path d="M8 9l5 5" /></Toggle>
      <Toggle name="二维对象捕捉" on><path d="M4.500 6v10.500h12V4.500H7" stroke="#fff" /><path d="M1.500 1.500h5v5h-5z" stroke="#fff" /></Toggle>
      <Drop name="二维对象捕捉" />
      <Toggle name="线宽" on className="ml-0.5"><path d="M1 4h16M1 9h9M1 14h16" stroke="#fff" strokeWidth="2" /><path d="M1 9h9" stroke="#fff" strokeWidth="4" /><path d="M10 9h7" stroke="#fff" /></Toggle>
      <Toggle name="透明度" on className="ml-px"><path d="M1.500 1.500h15v15h-15z" stroke="#fff" /><path d="M3 4.500h12M3 10.500h12" stroke="#fff" strokeWidth="3" strokeDasharray="3 3" /><path d="M6 7.500h10M6 13.500h10" stroke="#fff" strokeWidth="3" strokeDasharray="3 3" /></Toggle>
      <Toggle name="选择循环" className="ml-px"><path d="M7 7h10v10H7z" fill="#62cf93" stroke="none" /><path d="M3.500 1v6M1 3.500h5M7 4.500h7V7M4.500 7v6H7" /></Toggle>
      <Toggle name="三维对象捕捉" className="ml-0.5"><path d="M6.500 5.500h7v7h-7zM6.500 5.500l4-3.500h6v7l-3 3.500M13.500 5.500l3-3.500" /><path d="M1.500 11.500h4v4h-4z" stroke="#e8a07a" /></Toggle>
      <Drop name="三维对象捕捉" />
      <Toggle name="动态 UCS" className="ml-0.5"><path d="M4.500 3v11.500H16M2 5l2.500-3L7 5M14 12l2.500 2.500L14 17" /><path d="M11 2 8 8h3l-1 5 5-7h-3z" fill={LIGHT} stroke="none" /></Toggle>
      <Toggle name="选择过滤" className="ml-0.5"><path d="M3.500 5.500h9v9h-9z" strokeDasharray="2 1" /><path d="M5 3l3-1.500h8.500V10L14 13" /><g fill={BLUE} stroke="none"><path d="M2 4h3v3H2zM11 4h3v3h-3zM2 13h3v3H2zM11 13h3v3h-3z" /></g></Toggle>
      <Drop name="选择过滤" />
      <Toggle name="小控件" on><path d="M9 1.500l6.500 4v7L9 16.500l-6.500-4v-7zM9 2v8M9 10l6.500 3M9 10l-6.500 3" stroke="#fff" strokeWidth="1.300" /></Toggle>
      <Drop name="小控件" />
      <Toggle name="注释可见性" on className="ml-1"><Person /><circle cx="14" cy="4" r="2.500" stroke="#fff" /></Toggle>
      <Toggle name="自动缩放"><Person /><path d="M15 1l-4 5h2.500L12 10l5-6h-2.500z" fill={LIGHT} stroke="#3b4351" strokeWidth=".5" /></Toggle>
      <Toggle name="注释比例"><Person /></Toggle>
      <div className="ml-0.5 flex w-[77px] shrink-0 items-center bg-[#3b4351] pr-1 pl-[3px]">
        <select aria-label="注释比例列表" className="min-w-0 flex-1 appearance-none bg-transparent text-xs outline-none"><option>1:1 / 100%</option></select>
        <Caret size={7} />
      </div>
      <Toggle name="切换工作空间" className="ml-0.5"><circle cx="9" cy="9" r="4" strokeWidth="3.500" /><circle cx="9" cy="9" r="6.800" strokeWidth="2.400" strokeDasharray="2.670 2.670" /></Toggle>
      <Drop name="工作空间" />
      <Toggle name="注释监视器" className="ml-[3px]"><path d="M9 1v16M1 9h16" strokeWidth="1.800" /></Toggle>
      <Toggle name="单位" className="ml-[3px]"><path d="M5 1h4v16H5z" fill={LIGHT} stroke="none" /><path d="M8 2h5M8 5.500h3M8 9h5M8 12.500h3M8 16h5" strokeWidth="1.600" /></Toggle>
      <div className="flex w-[73px] shrink-0 items-center bg-[#3b4351] pr-1 pl-[5px]">
        <select aria-label="当前图形单位" className="min-w-0 flex-1 appearance-none bg-transparent text-xs font-bold outline-none"><option>小数</option></select>
        <Caret size={7} />
      </div>
      <Toggle name="快捷特性" className="ml-px"><path d="M3.500 1.500h11v15h-11zM3 3h12" /><path d="M5 6.500h2m1 0h5m-8 3.500h2m1 0h5m-8 3.500h2m1 0h5" strokeWidth="1.500" /></Toggle>
      <Toggle name="锁定用户界面" className="ml-[3px]"><path d="M8 13.500H1.500v-12h14V7M2 3h13" strokeWidth="1.300" /><path d="M8 11h7v6H8z" fill={LIGHT} stroke="none" /><path d="M13.500 11V9q0-1.500 2-1.500t2 1.500" /></Toggle>
      <Drop name="锁定用户界面" />
      <Toggle name="隔离对象" className="ml-0.5"><path d="M1.500 2.500h6v6h-6zM8 11l3.500 6h-7z" /><circle cx="14" cy="8" r="3" /></Toggle>
      <Toggle name="图形性能" on className="ml-[3px]"><circle cx="9" cy="9" r="7.500" fill="#7fa9da" stroke="#e9eef8" strokeWidth="1.500" /><path d="M8 10l5-5M5 13h7" stroke="#fff" /></Toggle>
      <Toggle name="硬件加速" className="ml-1.5"><path d="M1 2h15v11H1z" fill="#f4f4f9" stroke="none" /><path d="M2 9l3-4 3 5 3-4 4 4" stroke="#3b4351" strokeWidth="1.400" /><path d="M12 7l6 10H7z" fill="#e08e4c" stroke="none" /><path d="M12.500 10v4m0 1v1" stroke="#3b4351" /></Toggle>
      <Toggle name="全屏显示" className="ml-1.5"><path d="M1.500 3.500h15v11h-15zM10 8.500l3.500-3M11 5.500h3V8M8 10l-3.500 3M4 10.500V13h3" /></Toggle>
      <Toggle name="自定义"><path d="M1 3h16M1 9h16M1 15h16" strokeWidth="1.800" /></Toggle>
    </footer>
  );
}

export default function App() {
  return (
    <div className="flex min-h-screen bg-[#ece9f3] pb-1 font-['Noto_Sans','Noto_Sans_CJK_SC',sans-serif]">
      <div className="w-1 shrink-0"><div className="h-[30px] bg-[#5a80e8]" /></div>
      <div className="flex min-w-0 flex-1 flex-col overflow-hidden bg-[#1f2730]">
        <Header />
        <Ribbon />
        <FileTabs />
        <Canvas />
        <CommandLine />
        <LayoutTabs />
        <StatusBar />
      </div>
      <div className="w-1 shrink-0" />
    </div>
  );
}
